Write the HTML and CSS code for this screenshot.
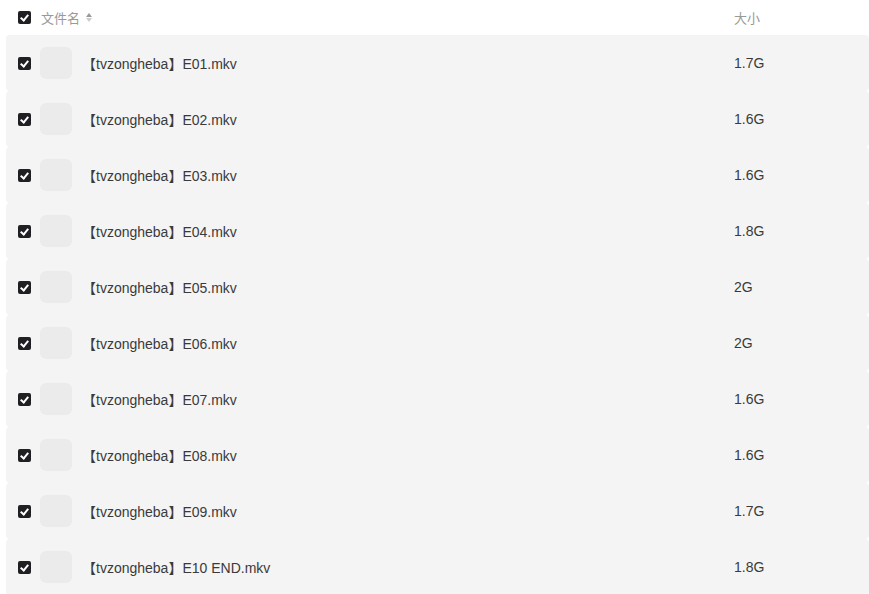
FILE: index.html
```html
<!DOCTYPE html>
<html lang="zh-CN">
<head>
  <meta charset="UTF-8">
  <title>文件列表</title>
  <link rel="stylesheet" href="styles.css">
</head>
<body>
  <div class="file-table">
    <div class="table-head">
      <span class="check"></span>
      <span class="head-name">文件名 <span class="sort"><i class="up"></i><i class="down"></i></span></span>
      <span class="head-size">大小</span>
    </div>

    <div class="file-list">
      <div class="file-row"><span class="check"></span><span class="thumb"></span><span class="name">【tvzongheba】E01.mkv</span><span class="size">1.7G</span></div>
      <div class="file-row"><span class="check"></span><span class="thumb"></span><span class="name">【tvzongheba】E02.mkv</span><span class="size">1.6G</span></div>
      <div class="file-row"><span class="check"></span><span class="thumb"></span><span class="name">【tvzongheba】E03.mkv</span><span class="size">1.6G</span></div>
      <div class="file-row"><span class="check"></span><span class="thumb"></span><span class="name">【tvzongheba】E04.mkv</span><span class="size">1.8G</span></div>
      <div class="file-row"><span class="check"></span><span class="thumb"></span><span class="name">【tvzongheba】E05.mkv</span><span class="size">2G</span></div>
      <div class="file-row"><span class="check"></span><span class="thumb"></span><span class="name">【tvzongheba】E06.mkv</span><span class="size">2G</span></div>
      <div class="file-row"><span class="check"></span><span class="thumb"></span><span class="name">【tvzongheba】E07.mkv</span><span class="size">1.6G</span></div>
      <div class="file-row"><span class="check"></span><span class="thumb"></span><span class="name">【tvzongheba】E08.mkv</span><span class="size">1.6G</span></div>
      <div class="file-row"><span class="check"></span><span class="thumb"></span><span class="name">【tvzongheba】E09.mkv</span><span class="size">1.7G</span></div>
      <div class="file-row"><span class="check"></span><span class="thumb"></span><span class="name">【tvzongheba】E10 END.mkv</span><span class="size">1.8G</span></div>
    </div>
  </div>
</body>
</html>
```

FILE: styles.css
```css
body {
  margin: 0;
  background: #fff;
  font-family: "Liberation Sans", "Noto Sans CJK SC", sans-serif;
  font-size: 14px;
  color: #3a3a3a;
}
.file-table {
  padding-left: 6px;
}
.table-head {
  display: flex;
  align-items: center;
  height: 35px;
  font-size: 13px;
  color: #999;
}
.check {
  width: 13px;
  height: 13px;
  margin-left: 12px;
  border-radius: 2px;
  background: #1f1f24;
  position: relative;
  flex: none;
}
.check::after {
  content: "";
  position: absolute;
  left: 4px;
  top: 2px;
  width: 3px;
  height: 6px;
  border: solid #fff;
  border-width: 0 2px 2px 0;
  transform: rotate(40deg);
}
.head-name {
  margin-left: 10px;
  display: flex;
  align-items: center;
  gap: 6px;
  width: 693px;
}
.sort {
  display: inline-flex;
  flex-direction: column;
  gap: 1px;
}
.sort i {
  width: 0;
  height: 0;
  border-left: 3px solid transparent;
  border-right: 3px solid transparent;
}
.sort .up {
  border-bottom: 4px solid #999;
}
.sort .down {
  border-top: 4px solid #ccc;
}
.file-row {
  display: flex;
  align-items: center;
  height: 56px;
  background: #f4f4f4;
  border-radius: 4px;
}
.thumb {
  width: 32px;
  height: 32px;
  margin-left: 9px;
  border-radius: 6px;
  background: #ebebeb;
  flex: none;
}
.name {
  margin-left: 10px;
  width: 652px;
}
.size {
  color: #3a3a3a;
}
```
